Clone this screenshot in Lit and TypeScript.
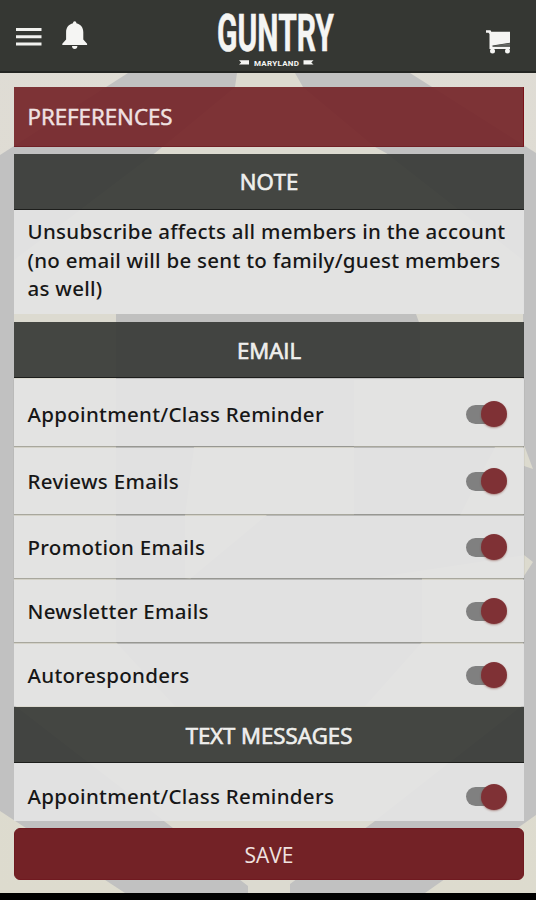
import { LitElement, html, svg, css } from "lit";
import { customElement, property } from "lit/decorators.js";

@customElement("pref-switch")
class PrefSwitch extends LitElement {
  static styles = css`
    :host { display: flex; align-items: center; width: 41px; height: 28px; }
    .track { width: 32px; height: 19px; border-radius: 10px; background: #808080; }
    .knob {
      flex: none; width: 26px; height: 26px; margin-left: -17px; border-radius: 50%;
      background: #7f3135; box-shadow: 0 1px 2px rgba(110, 40, 30, 0.45);
    }
  `;
  render() {
    return html`<div class="track"></div><div class="knob"></div>`;
  }
}

@customElement("pref-row")
class PrefRow extends LitElement {
  @property() label = "";
  static styles = css`
    :host {
      display: flex; align-items: center; justify-content: space-between;
      box-sizing: border-box; padding: 0 17px 0 13.5px;
      background: rgba(227, 227, 227, 0.93);
      font: 500 20.5px/28px "Noto Sans", "Open Sans", sans-serif; letter-spacing: 0.3px; color: #171717;
    }
    .label { margin-top: -1px; }
  `;
  render() {
    return html`<span class="label">${this.label}</span><pref-switch></pref-switch>`;
  }
}

const backdrop = svg`
  <svg class="backdrop" viewBox="0 0 536 900" aria-hidden="true">
    <linearGradient id="paper" x1="0" y1="0" x2="0" y2="1">
      <stop offset="0" stop-color="#dfdcd5"/><stop offset="1" stop-color="#dddbce"/>
    </linearGradient>
    <rect width="536" height="900" fill="url(#paper)"/>
    <path fill="#c1c1c1" d="M0 155 128 73H410L536 153V815L425 893H125L0 811Z"/>
    <path fill="#dcdad0" d="M237 73H295L303 87 375 147 386 153 523 260V705L375 821 290 884V893H248V886L173 828 14 705V260L155 153 235 87Z"/>
    <path fill="#c0c0bf" d="M116 314H416L420 325V380H354V447H495L460 515H525V555L371 578H422V642L365 706H175L116 642ZM194 380V447L185 515V578L190 579 267 515H354V447H194Z"/>
    <path fill="#dcdace" d="M524 445 533 469 524 466ZM524 555 533 562 524 576Z"/>
  </svg>`;

@customElement("app-root")
class AppRoot extends LitElement {
  static styles = css`
    :host {
      display: block; position: relative; width: 536px; height: 900px; overflow: hidden;
      font-family: "Noto Sans", "Open Sans", sans-serif; background: #000;
    }
    .backdrop { position: absolute; left: 0; top: 0; width: 536px; height: 900px; }
    .page { position: relative; display: flex; flex-direction: column; height: 900px; }
    .bar {
      display: grid; grid-template-columns: 1fr 152px 1fr; height: 73px; flex: none;
      box-sizing: border-box; background: #353733; border-bottom: 2px solid #232522;
    }
    .left { display: flex; padding: 20px 0 0 14px; gap: 17px; }
    .right { display: flex; justify-content: flex-end; padding: 28px 24px 0 0; }
    .bar svg { display: block; }
    .content { display: flex; flex-direction: column; padding: 14px 12px 0 14px; }
    .title {
      height: 60px; box-sizing: border-box; padding-left: 13.5px; background: rgba(115, 34, 39, 0.91);
      border-right: 1px solid #7a1219; border-bottom: 1px solid #702126;
      font: 500 22.3px/59px "Open Sans", sans-serif; color: #f0e2e2;
      -webkit-text-stroke: 0.5px #f0e2e2;
    }
    .heading {
      height: 56px; box-sizing: border-box; border-bottom: 1px solid #1d1e1c;
      background: rgba(54, 56, 52, 0.915); color: #efefed; text-align: center;
      font: 500 22.2px/57px "Open Sans", sans-serif; -webkit-text-stroke: 0.7px #efefed;
    }
    .note-head { margin-top: 7px; line-height: 56px; }
    .note {
      height: 104px; box-sizing: border-box; padding: 7px 13.5px 0; margin-bottom: 8px;
      background: rgba(227, 227, 227, 0.93);
      font: 500 20.5px/28.5px "Noto Sans", "Open Sans", sans-serif; letter-spacing: 0.27px; color: #171717;
    }
    .rows { display: grid; grid-template-rows: 67px 66px 62px 62px 62px; row-gap: 2px; padding: 1px 0; }
    .rows pref-row { box-shadow: 0 1px 1px rgba(90, 90, 80, 0.4); }
    .rows pref-row:first-child { padding-top: 3px; }
    .rows pref-row:last-child { box-shadow: none; }
    .last { height: 58px; padding-top: 9px; }
    .save {
      height: 52px; margin-top: 7px; border-radius: 6px; background: #732226; color: #f0e2e0;
      box-sizing: border-box; border: 1px solid #701a20; text-align: center;
      font: 400 21px/52px "Open Sans", sans-serif;
    }
    .foot { height: 7px; margin-top: auto; background: #000; }
    .brand { font-family: Roboto, sans-serif; font-weight: 700; overflow: visible; }
    .word { stroke: #f5f5f3; stroke-width: 0.5px; }
  `;

  render() {
    const emails = ["Appointment/Class Reminder", "Reviews Emails", "Promotion Emails", "Newsletter Emails", "Autoresponders"];
    return html`
      ${backdrop}
      <div class="page">
        <header class="bar">
          <div class="left">
            <svg width="30" height="34" viewBox="14 20 30 34" fill="#f1f1ef">
              <path d="M16 28h25.500v3H16zM16 35.200h25.500v3H16zM16 42.400h25.500v3H16z"/>
            </svg>
            <svg width="30" height="34" viewBox="61 20 30 34" fill="#f5f5f3">
              <path d="M74.700 21.300c1 0 1.700.8 1.700 1.900 4.200.9 6.900 4.400 6.900 9v7.400l3.800 4.200v1.300H62.300v-1.300l3.800-4.200v-7.400c0-4.600 2.700-8.100 6.900-9 0-1.100.7-1.900 1.700-1.900zM72 46h5.400c0 1.800-1.100 3-2.700 3S72 47.800 72 46z"/>
            </svg>
          </div>
          <svg class="brand" width="152" height="70" viewBox="192 0 152 70" fill="#f5f5f3">
            <text class="word" x="217" y="50.500" font-size="51" textLength="117" lengthAdjust="spacingAndGlyphs">GUNTRY</text>
            <text x="254" y="65.500" font-size="8" textLength="45" lengthAdjust="spacing">MARYLAND</text>
            <path d="M239 60.300h10v4.300h-10l2.200-2.100zM313.500 60.300h-10v4.300h10l-2.200-2.100z"/>
          </svg>
          <div class="right">
            <svg width="28" height="28" viewBox="484 28 28 28">
              <path fill="#f5f5f3" d="M486 30.300h4.500l.8 1.500H510v11l-17.500 2.700v1.300H510V49H489.500V34l-1-1.200H486z"/>
              <path d="M491.500 45.900 510 43.300v2.500H492z" fill="#6b6d69"/>
              <circle cx="492.500" cy="51" r="2.500" fill="#f5f5f3"/><circle cx="507.500" cy="51" r="2.500" fill="#f5f5f3"/>
            </svg>
          </div>
        </header>
        <main class="content">
          <div class="title">PREFERENCES</div>
          <div class="heading note-head">NOTE</div>
          <div class="note">Unsubscribe affects all members in the account (no email will be sent to family/guest members as well)</div>
          <div class="heading">EMAIL</div>
          <div class="rows">${emails.map((e) => html`<pref-row .label=${e}></pref-row>`)}</div>
          <div class="heading">TEXT MESSAGES</div>
          <pref-row class="last" .label=${"Appointment/Class Reminders"}></pref-row>
          <div class="save">SAVE</div>
        </main>
        <div class="foot"></div>
      </div>
    `;
  }
}
